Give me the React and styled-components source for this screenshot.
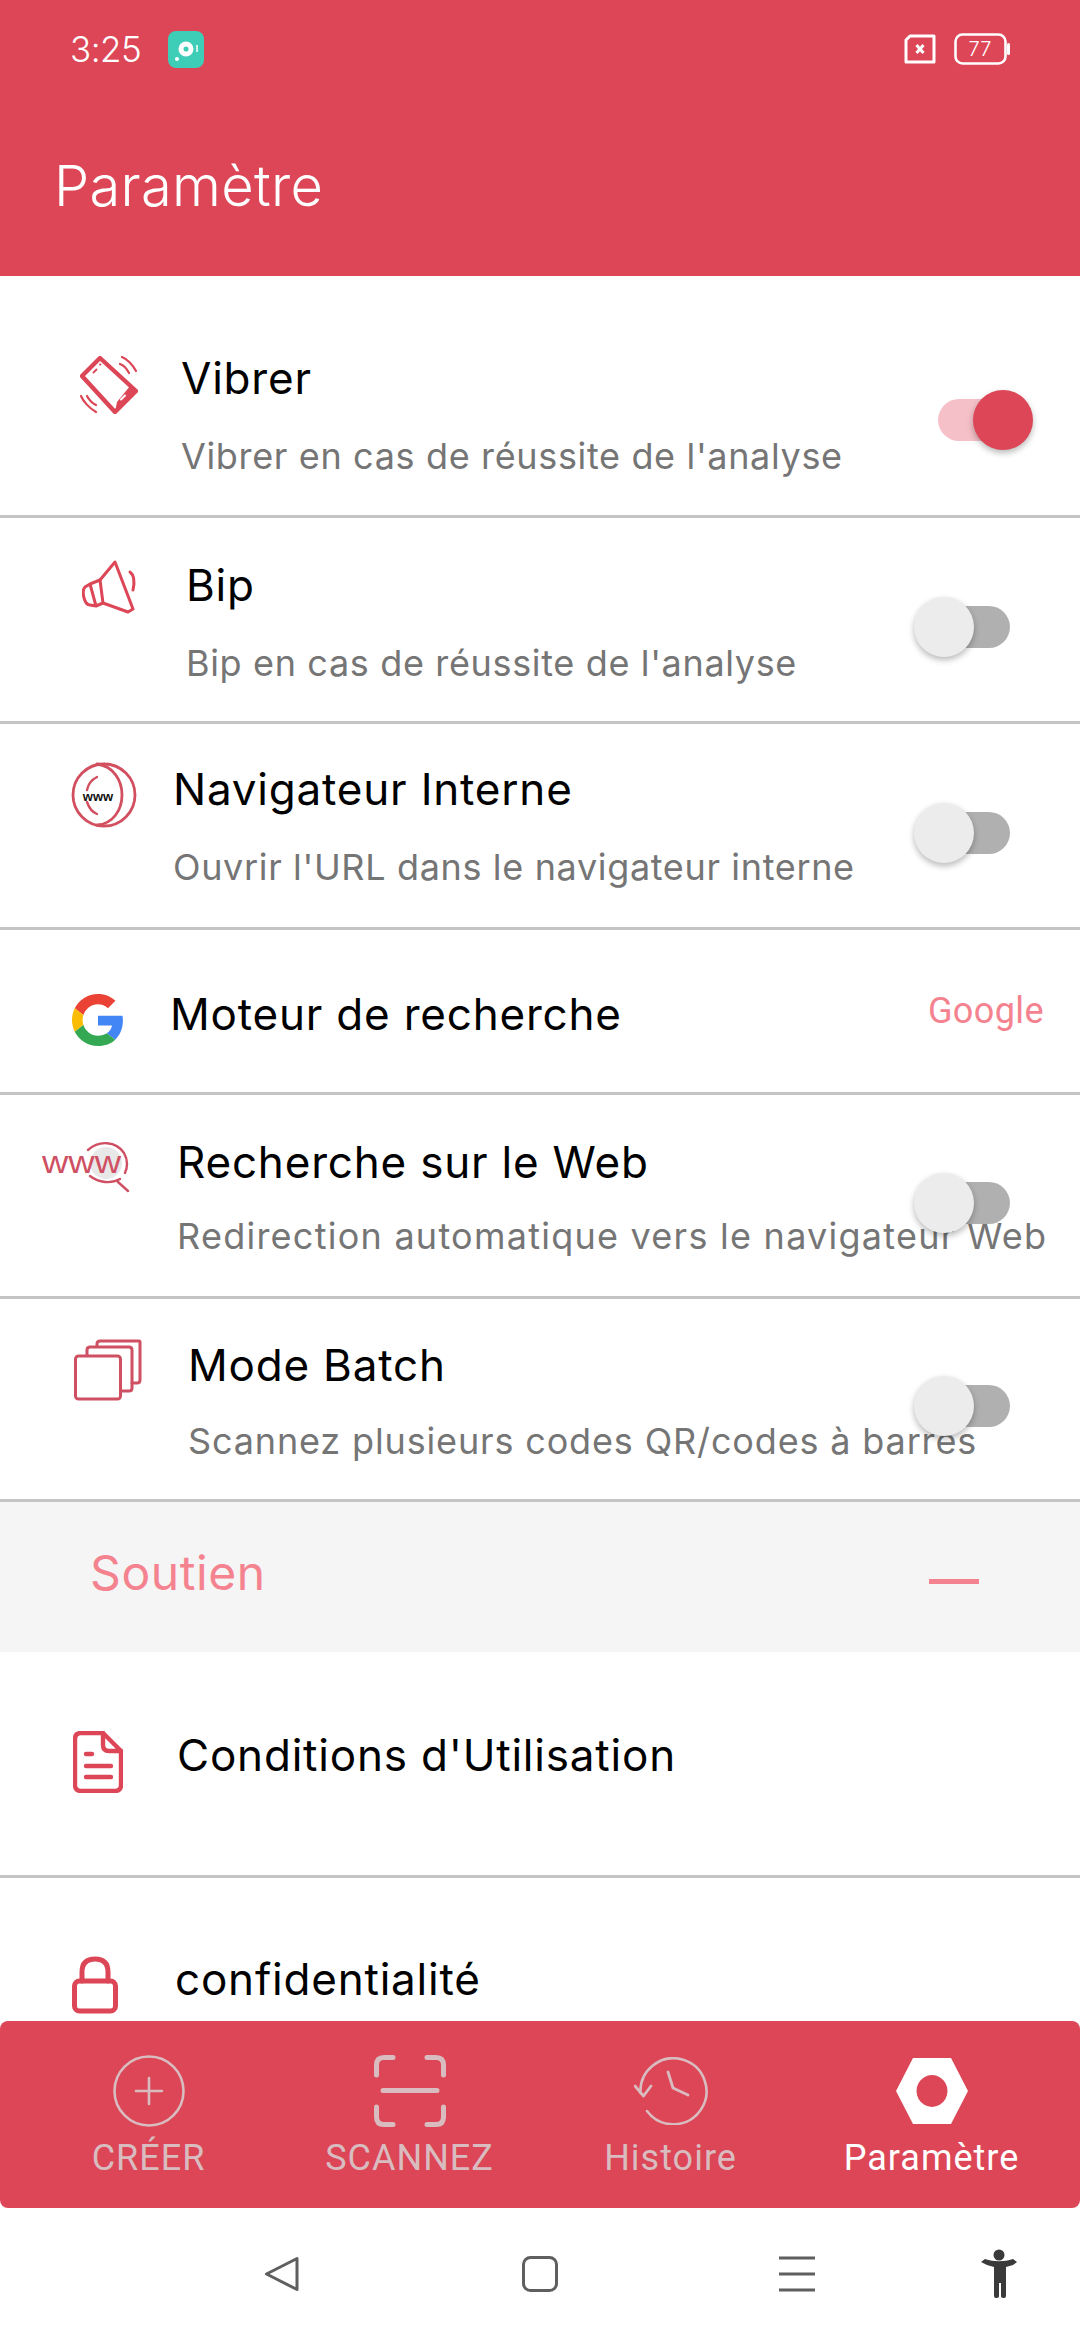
import React from 'react';
import styled, { createGlobalStyle } from 'styled-components';

const RED = '#dc4656';
const PINK = '#f4828f';

const GlobalStyle = createGlobalStyle`
  html, body { margin: 0; padding: 0; background: #fff; }
  * { box-sizing: border-box; }
`;

const Screen = styled.div`
  width: 1080px;
  height: 2340px;
  display: flex;
  flex-direction: column;
  overflow: hidden;
  background: #fff;
  font-family: Inter, "Open Sans", sans-serif;
`;

// header
const Header = styled.header`
  height: 276px;
  flex: none;
  background: ${RED};
  color: #fff;
  padding: 26px 70px 0 70px;
`;

const StatusBar = styled.div`
  display: flex;
  align-items: center;
  height: 46px;
`;

const Clock = styled.span`
  font-size: 35px;
  font-weight: 300;
  letter-spacing: -0.5px;
  width: 98px;
`;

const StatusRight = styled.div`
  margin-left: auto;
  display: flex;
  align-items: center;
  gap: 18px;
`;

const Title = styled.h1`
  margin: 83px 0 0 -16px;
  font-size: 56px;
  line-height: 62px;
  font-weight: 300;
  letter-spacing: 0.3px;
`;

// settings list
const List = styled.main`
  flex: 1;
  min-height: 0;
  overflow: hidden;
  padding-top: 34px;
`;

const Row = styled.div`
  position: relative;
  height: ${(p) => p.$height}px;
  display: flex;
  align-items: flex-start;
  border-bottom: ${(p) => (p.$plain ? 'none' : '3px solid #c4c4c4')};
  padding-left: ${(p) => p.$iconLeft}px;
`;

const IconSlot = styled.div`
  flex: none;
  width: ${(p) => p.$textLeft - p.$iconLeft}px;
  padding-top: ${(p) => p.$iconTop}px;
  line-height: 0;
`;

const RowText = styled.div`
  padding-top: ${(p) => p.$textTop}px;
  white-space: nowrap;
`;

const RowTitle = styled.div`
  font-size: 44px;
  line-height: 56px;
  color: #000;
  letter-spacing: 0.8px;
`;

const RowSub = styled.div`
  font-size: 36px;
  line-height: 48px;
  margin-top: ${(p) => p.$gap}px;
  color: #757575;
  letter-spacing: ${(p) => p.$spacing}px;
`;

const Track = styled.div`
  position: absolute;
  left: 938px;
  top: calc(50% + 7px);
  transform: translateY(-50%);
  width: 72px;
  height: 42px;
  border-radius: 21px;
  background: ${(p) => (p.$on ? '#f5c0c8' : '#b0b0b0')};
`;

const Thumb = styled.div`
  position: absolute;
  top: -9px;
  left: ${(p) => (p.$on ? '35px' : '-24px')};
  width: 60px;
  height: 60px;
  border-radius: 50%;
  background: ${(p) => (p.$on ? RED : '#ececec')};
  box-shadow: 0 3px 6px rgba(0, 0, 0, 0.28);
`;

const RowValue = styled.span`
  position: absolute;
  right: 36px;
  top: 50%;
  transform: translateY(-50%);
  font-family: Roboto, sans-serif;
  font-size: 36px;
  letter-spacing: 0.4px;
  color: ${PINK};
`;

const Section = styled.div`
  height: 150px;
  background: #f5f5f5;
  display: flex;
  align-items: center;
  justify-content: space-between;
  padding: 0 101px 0 90px;
`;

const SectionTitle = styled.span`
  font-size: 48px;
  margin-top: -9px;
  color: ${PINK};
  letter-spacing: 0.6px;
`;

const Minus = styled.span`
  width: 50px;
  height: 5px;
  margin-top: 8px;
  background: ${PINK};
`;

// bottom tabs
const TabBar = styled.nav`
  flex: none;
  height: 187px;
  background: ${RED};
  border-radius: 8px;
  padding: 0 18px;
  display: grid;
  grid-template-columns: repeat(4, 1fr);
`;

const Tab = styled.div`
  display: flex;
  flex-direction: column;
  align-items: center;
  padding-top: 33px;
  color: ${(p) => (p.$active ? '#fff' : '#d9bcc0')};
`;

const TabIcon = styled.div`
  height: 74px;
  display: flex;
  align-items: center;
  line-height: 0;
`;

const TabLabel = styled.span`
  margin-top: 9px;
  font-family: Roboto, sans-serif;
  font-size: 36px;
  line-height: 42px;
  letter-spacing: 1px;
`;

// system navigation
const SystemNav = styled.div`
  height: 132px;
  flex: none;
  display: grid;
  grid-template-columns: 264px 258px 257px 201px 1fr;
  align-items: center;
  padding-bottom: 1px;
`;

const NavSpot = styled.div`
  grid-column: ${(p) => p.$col};
  line-height: 0;
`;

const stroke = { fill: 'none', stroke: RED, strokeLinecap: 'round', strokeLinejoin: 'round' };

const VibrateIcon = () => (
  <svg width="58" height="58" viewBox="0 0 58 58">
    <path d="M20 2L56 35 35 56 2 20Z" {...stroke} strokeWidth="4.400" />
    <path d="M35 56L56 35 50 30 37 46Z" fill={RED} />
    <path d="M41 43.500l4-4" stroke="#fff" strokeWidth="2" strokeLinecap="round" />
    <path d="M13.500 16.500l3-3M20 8.500h.5" {...stroke} strokeWidth="1.800" />
    <path d="M42 1c5 2 11 8 14 14M40 8c3 1 7 5 9 9" {...stroke} strokeWidth="2.200" />
    <path d="M1 40c2 5 8 12 15 16M7 40c2 4 5 7 9 9" {...stroke} strokeWidth="2.200" />
  </svg>
);

const SpeakerIcon = () => (
  <svg width="58" height="54" viewBox="0 0 58 54">
    <path d="M18 20L33 2 51 49 46 52 21 43Z" {...stroke} strokeWidth="3" />
    <path d="M18 20L8 24 14 46 21 43M8 24L3 27Q0 30 2 38 4 45 8 45L14 46" {...stroke} strokeWidth="3" />
    <path d="M48 12c4 3 5 9 3 18" {...stroke} strokeWidth="3" />
  </svg>
);

const WwwCircleIcon = () => (
  <svg width="66" height="66" viewBox="0 0 66 66">
    <circle cx="33" cy="33" r="31" {...stroke} stroke="#d24f60" strokeWidth="2.800" />
    <path d="M26 2C42 4 51 18 51 33S42 62 26 63" {...stroke} stroke="#d24f60" strokeWidth="2.800" />
    <path d="M26 15C20 18 17 23 16 28M16 40C18 46 21 50 26 52" {...stroke} stroke="#d24f60" strokeWidth="2.400" />
    <text x="27" y="39" textAnchor="middle" fontFamily="'Liberation Sans', sans-serif" fontWeight="700" fontSize="13" fill="#111">www</text>
  </svg>
);

const GoogleIcon = () => (
  <svg width="52" height="52" viewBox="0 0 48 48">
    <path fill="#EA4335" d="M24 9.5c3.54 0 6.71 1.22 9.21 3.6l6.85-6.85C35.9 2.38 30.47 0 24 0 14.62 0 6.51 5.38 2.56 13.22l7.98 6.19C12.43 13.72 17.74 9.5 24 9.5z" />
    <path fill="#4285F4" d="M46.98 24.55c0-1.57-.15-3.09-.38-4.55H24v9.02h12.94c-.58 2.96-2.26 5.48-4.78 7.18l7.73 6c4.51-4.18 7.09-10.36 7.09-17.65z" />
    <path fill="#FBBC05" d="M10.53 28.59c-.5-1.45-.78-2.99-.78-4.59s.27-3.14.78-4.59l-7.98-6.19C.92 16.46 0 20.12 0 24c0 3.88.92 7.54 2.56 10.78l7.97-6.19z" />
    <path fill="#34A853" d="M24 48c6.48 0 11.93-2.13 15.89-5.81l-7.73-6c-2.15 1.45-4.92 2.3-8.16 2.3-6.26 0-11.57-4.22-13.47-9.91l-7.98 6.19C6.51 42.62 14.62 48 24 48z" />
  </svg>
);

const WebSearchIcon = () => (
  <svg width="88" height="52" viewBox="0 0 88 52">
    <circle cx="64" cy="22" r="16" fill="#e8e8e8" />
    <text x="0" y="32" fontFamily="'Liberation Sans', sans-serif" fontSize="31" fill="#cf5063" textLength="79" lengthAdjust="spacingAndGlyphs">www</text>
    <path d="M46 9C57-1 74 0 82 12c4 7 4 13 1 20M48 35c9 7 21 8 30 3M76 41l10 9" {...stroke} stroke="#cf5063" strokeWidth="2.400" />
  </svg>
);

const BatchIcon = () => (
  <svg width="68" height="62" viewBox="0 0 68 62">
    <rect x="1.500" y="17" width="45" height="43" rx="3" {...stroke} stroke="#cf5063" strokeWidth="3" />
    <path d="M13 16v-5q0-3 3-3h39q3 0 3 3v38q0 3-3 3h-7" {...stroke} stroke="#cf5063" strokeWidth="3" />
    <path d="M23 7V5q0-3 3-3h39q1 0 1 1v38q0 3-3 3h-5" {...stroke} stroke="#cf5063" strokeWidth="3" />
  </svg>
);

const DocIcon = () => (
  <svg width="50" height="62" viewBox="0 0 50 62">
    <path d="M8 2h22l18 18v34q0 6-6 6H8q-6 0-6-6V8q0-6 6-6Z" {...stroke} strokeWidth="4.400" />
    <path d="M30 2v12q0 6 6 6h12" {...stroke} strokeWidth="4.400" />
    <path d="M13 23h6M13 35h25M13 46h25" {...stroke} strokeWidth="4.400" />
  </svg>
);

const LockIcon = () => (
  <svg width="46" height="58" viewBox="0 0 46 58">
    <rect x="2.500" y="25" width="41" height="30" rx="5" {...stroke} strokeWidth="5" />
    <path d="M10 25V16C10 7 15 3 23 3s13 4 13 13v9" {...stroke} strokeWidth="5" />
  </svg>
);

const tabStroke = { fill: 'none', stroke: 'currentColor', strokeLinecap: 'round', strokeLinejoin: 'round' };

const TabIcons = {
  create: (
    <svg width="72" height="72" viewBox="0 0 72 72">
      <circle cx="36" cy="36" r="34.500" {...tabStroke} strokeWidth="2.600" />
      <path d="M36 23v26M23 36h26" {...tabStroke} strokeWidth="2.600" />
    </svg>
  ),
  scan: (
    <svg width="72" height="72" viewBox="0 0 72 72">
      <path d="M19 2.500H10Q2.500 2.500 2.500 10V20M53 2.500H62Q69.500 2.500 69.500 10V20M2.500 52V62Q2.500 69.500 10 69.500H19M69.500 52V62Q69.500 69.500 62 69.500H53" {...tabStroke} strokeWidth="5" />
      <path d="M9 35.500H63" {...tabStroke} strokeWidth="5" />
    </svg>
  ),
  history: (
    <svg width="74" height="68" viewBox="0 0 74 68">
      <path d="M6.500 36A33 33 0 1 1 13 54" {...tabStroke} strokeWidth="2.600" />
      <path d="M34 15l5 16 15 7M1 29l8.500 10L17 29" {...tabStroke} strokeWidth="2.800" />
    </svg>
  ),
  settings: (
    <svg width="72" height="68" viewBox="0 0 72 68">
      <path fillRule="evenodd" fill="currentColor" d="M17 1H55L72 34 55 67H17L0 34ZM36 18a15.500 16 0 1 0 .01 0Z" />
    </svg>
  ),
};

const rows = [
  { key: 'vib', title: 'Vibrer', sub: "Vibrer en cas de réussite de l'analyse", icon: <VibrateIcon />, height: 208, iconLeft: 80, iconTop: 46, textLeft: 181, textTop: 40, on: true },
  { key: 'bip', title: 'Bip', sub: "Bip en cas de réussite de l'analyse", icon: <SpeakerIcon />, height: 206, iconLeft: 82, iconTop: 42, textLeft: 186, textTop: 39, on: false },
  { key: 'nav', title: 'Navigateur Interne', sub: "Ouvrir l'URL dans le navigateur interne", icon: <WwwCircleIcon />, height: 206, iconLeft: 71, iconTop: 38, textLeft: 173, textTop: 37, on: false },
  { key: 'eng', title: 'Moteur de recherche', value: 'Google', icon: <GoogleIcon />, height: 165, iconLeft: 72, iconTop: 64, textLeft: 170, textTop: 56 },
  { key: 'web', title: 'Recherche sur le Web', sub: 'Redirection automatique vers le navigateur Web', subSpacing: 1.25, subGap: 22, icon: <WebSearchIcon />, height: 204, iconLeft: 42, iconTop: 46, textLeft: 177, textTop: 39, on: false },
  { key: 'bat', title: 'Mode Batch', sub: 'Scannez plusieurs codes QR/codes à barres', subSpacing: 0.85, subGap: 24, icon: <BatchIcon />, height: 203, iconLeft: 74, iconTop: 40, textLeft: 188, textTop: 38, on: false },
];

const tabs = [
  { key: 'create', label: 'CRÉER' },
  { key: 'scan', label: 'SCANNEZ' },
  { key: 'history', label: 'Histoire' },
  { key: 'settings', label: 'Paramètre', active: true },
];

const SettingRow = ({ row }) => (
  <Row $height={row.height} $iconLeft={row.iconLeft} $plain={row.plain}>
    <IconSlot $iconLeft={row.iconLeft} $textLeft={row.textLeft} $iconTop={row.iconTop}>
      {row.icon}
    </IconSlot>
    <RowText $textTop={row.textTop}>
      <RowTitle>{row.title}</RowTitle>
      {row.sub && (
        <RowSub $gap={row.subGap ?? 26} $spacing={row.subSpacing ?? 0.65}>
          {row.sub}
        </RowSub>
      )}
    </RowText>
    {row.on !== undefined && (
      <Track $on={row.on}>
        <Thumb $on={row.on} />
      </Track>
    )}
    {row.value && <RowValue>{row.value}</RowValue>}
  </Row>
);

export default function App() {
  return (
    <Screen>
      <GlobalStyle />
      <Header>
        <StatusBar>
          <Clock>3:25</Clock>
          <svg width="36" height="37" viewBox="0 0 36 37">
            <rect width="36" height="37" rx="8" fill="#3ecdb7" />
            <circle cx="18" cy="18" r="7.500" fill="#fff" />
            <circle cx="18" cy="18" r="2.500" fill="#3ecdb7" />
            <circle cx="9" cy="28" r="2" fill="#fff" />
            <path d="M29 14v7" stroke="#fff" strokeWidth="1.500" />
          </svg>
          <StatusRight>
            <svg width="32" height="30" viewBox="0 0 32 30">
              <path d="M6 2H30V28H2V6Z" fill="none" stroke="#fff" strokeWidth="3" strokeLinejoin="round" />
              <path d="M12.500 11l7 8M19.500 11l-7 8" stroke="#fff" strokeWidth="3" />
            </svg>
            <svg width="56" height="32" viewBox="0 0 56 32">
              <rect x="1.500" y="1.500" width="50" height="29" rx="7" fill="none" stroke="#fff" strokeWidth="2.600" />
              <rect x="53" y="10" width="3" height="12" rx="1.500" fill="#fff" />
              <text x="26" y="23" textAnchor="middle" fontFamily="Inter, sans-serif" fontWeight="300" fontSize="20" fill="#fff">77</text>
            </svg>
          </StatusRight>
        </StatusBar>
        <Title>Paramètre</Title>
      </Header>

      <List>
        {rows.map((row) => (
          <SettingRow key={row.key} row={row} />
        ))}
        <Section>
          <SectionTitle>Soutien</SectionTitle>
          <Minus />
        </Section>
        <SettingRow row={{ title: "Conditions d'Utilisation", icon: <DocIcon />, height: 226, iconLeft: 73, iconTop: 79, textLeft: 177, textTop: 75 }} />
        <SettingRow row={{ title: 'confidentialité', icon: <LockIcon />, height: 200, plain: true, iconLeft: 72, iconTop: 78, textLeft: 175, textTop: 73 }} />
      </List>

      <TabBar>
        {tabs.map((tab) => (
          <Tab key={tab.key} $active={tab.active}>
            <TabIcon>{TabIcons[tab.key]}</TabIcon>
            <TabLabel>{tab.label}</TabLabel>
          </Tab>
        ))}
      </TabBar>

      <SystemNav>
        <NavSpot $col={2}>
          <svg width="36" height="38" viewBox="0 0 36 38">
            <path d="M33 3.500V34.500L2.500 19Z" fill="none" stroke="#5f5f5f" strokeWidth="3" strokeLinejoin="round" />
          </svg>
        </NavSpot>
        <NavSpot $col={3}>
          <svg width="36" height="36" viewBox="0 0 36 36">
            <rect x="1.500" y="1.500" width="33" height="33" rx="7" fill="none" stroke="#5f5f5f" strokeWidth="3" />
          </svg>
        </NavSpot>
        <NavSpot $col={4}>
          <svg width="36" height="36" viewBox="0 0 36 36">
            <path d="M0 2H36M0 18H36M0 34H36" stroke="#5f5f5f" strokeWidth="3" />
          </svg>
        </NavSpot>
        <NavSpot $col={5}>
          <svg width="38" height="50" viewBox="0 0 38 50">
            <circle cx="19" cy="6" r="5.500" fill="#3a3a3a" />
            <path d="M1 13l4-3c9 3 19 3 28 0l4 3-4 3-7 2v29q0 2-2 2h-1q-2 0-2-2V34h-2v13q0 2-2 2h-1q-2 0-2-2V18l-7-2Z" fill="#3a3a3a" />
          </svg>
        </NavSpot>
      </SystemNav>
    </Screen>
  );
}
